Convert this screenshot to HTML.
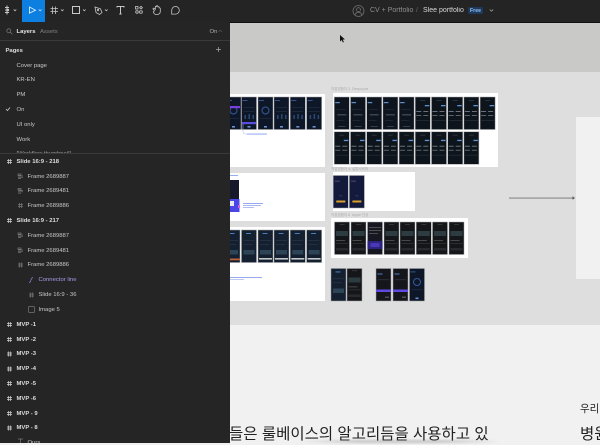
<!DOCTYPE html>
<html lang="ko"><head><meta charset="utf-8"><title>Slee portfolio</title>
<style>
html,body{margin:0;padding:0;background:#f1f1f1}
body{width:600px;height:443px;overflow:hidden;position:relative;font-family:"Liberation Sans","Noto Sans CJK KR",sans-serif}
div,span,svg{position:absolute}
.bg{left:230px;width:370px}
.w{background:#fff}
#side{left:0;top:22px;width:229.5px;height:421px;background:#252525;overflow:hidden}
#outer{left:0;top:0;width:229.5px;height:443px;overflow:hidden}
.t{position:absolute;font-size:5.9px;line-height:8px;color:#c8c8c8;white-space:nowrap;filter:blur(.25px);margin-top:.7px}
.b{font-weight:bold;color:#dedede}
.cap{font-size:3.5px;line-height:5px;color:#aaa;white-space:nowrap;filter:blur(.3px)}
</style></head><body>

<!-- canvas -->
<div class="bg" style="top:22px;height:50px;background:#c9c9c7"></div>
<div class="bg" style="top:72px;height:253px;background:#dedede"></div>
<div class="bg" style="top:325px;height:118px;background:#f1f1f1"></div>
<div style="left:576px;top:117px;width:24px;height:162px;background:#f1f1f1"></div>

<div class="w" style="left:230px;top:94px;width:95px;height:73px"></div>
<div class="w" style="left:230px;top:173px;width:95px;height:48px"></div>
<div class="w" style="left:230px;top:227px;width:95px;height:74px"></div>
<div class="w" style="left:333px;top:93px;width:165px;height:74px"></div>
<div class="w" style="left:333px;top:172px;width:82px;height:39px"></div>
<div class="w" style="left:331px;top:218px;width:137px;height:40px"></div>

<div class="cap" style="left:331px;top:87px">직접경험자 2. Deepcycle</div>
<div class="cap" style="left:331px;top:167px">직접경험자 4. 설립서비처</div>
<div class="cap" style="left:331px;top:213px">직접경험자 6. Apple 건강</div>

<svg style="left:0;top:0;filter:blur(.3px)" width="600" height="443" viewBox="0 0 600 443">
<defs>
<g id="a">
<rect width="15" height="32.500" fill="#0e151e" stroke="#a5a7aa" stroke-width=".5"/>
<rect x="1" y="5" width="4.500" height="1.200" fill="#5d8fd0"/>
<rect x="2" y="12" width="9" height=".7" fill="#262f3a"/>
<rect x="3" y="17" width="9" height="1.500" fill="#3a444e"/>
<rect x="2" y="23" width="8" height=".7" fill="#252e38"/>
<rect x="4" y="29" width="7" height="1" fill="#36404a"/>
</g>
<g id="b">
<rect width="15" height="32.500" fill="#0d141b" stroke="#a5a7aa" stroke-width=".5"/>
<rect x="9.500" y="8" width="4.500" height="1.300" fill="#5a93d8"/>
<rect x="5" y="3" width="5" height=".6" fill="#3e4750"/>
<rect x="1" y="14" width="5" height=".8" fill="#808890"/><rect x="8" y="14" width="5" height=".8" fill="#808890"/>
<rect x="1" y="18" width="5" height=".8" fill="#6f7780"/><rect x="8" y="18" width="5" height=".8" fill="#6f7780"/>
<rect x="1" y="23" width="13" height=".8" fill="#232d37"/>
</g>
<g id="c">
<rect width="15" height="32.500" fill="#0e1728" stroke="#9c9ea2" stroke-width=".5"/>
<rect x="1" y="3" width="5" height=".8" fill="#3e64a8"/>
<rect x="2" y="10" width="11" height=".6" fill="#26324a"/><rect x="2" y="14" width="11" height=".6" fill="#26324a"/>
<rect x="3" y="18" width="1.500" height="4" fill="#2c4870"/><rect x="7" y="17" width="1.500" height="5" fill="#2c4870"/><rect x="11" y="18" width="1.500" height="4" fill="#2c4870"/>
<rect x="6" y="29" width="3" height="1.600" fill="#6a8fd0"/>
</g>
<g id="r">
<rect width="15" height="32.500" fill="#0e1728" stroke="#9c9ea2" stroke-width=".5"/>
<rect x="1" y="3" width="5" height=".8" fill="#3e64a8"/>
<circle cx="7.500" cy="13.500" r="3.500" fill="none" stroke="#355a9c" stroke-width="1"/>
<rect x="2" y="21" width="11" height=".6" fill="#26324a"/>
<rect x="6" y="29" width="3" height="1.600" fill="#6a8fd0"/>
</g>
<g id="d">
<rect width="15" height="32.500" fill="#14202f" stroke="#9c9ea2" stroke-width=".5"/>
<rect x="4.500" y="3" width="5" height=".9" fill="#4d8ad0"/>
<rect x="2" y="10" width="11" height=".6" fill="#2b3a4c"/><rect x="2" y="14" width="9" height=".6" fill="#2b3a4c"/>
<rect x="2" y="20" width="11" height="4.500" fill="#2d4456"/>
</g>
<g id="dw">
<use href="#d"/>
<rect x="1" y="28" width="13" height="1.600" fill="#c6c9cc"/>
</g>
<g id="e">
<rect width="15" height="32.500" fill="#15161a" stroke="#a5a7aa" stroke-width=".5"/>
<rect x="5" y="2" width="5" height=".6" fill="#4a4a4a"/>
<rect x="1.500" y="9" width="12" height="5" fill="#2c3c40"/>
<rect x="1.500" y="18" width="9" height=".8" fill="#555"/><rect x="1.500" y="21" width="12" height=".7" fill="#363636"/>
<rect x="1.500" y="26" width="12" height="2.500" fill="#27292c"/>
</g>
<g id="f">
<rect width="15" height="32.500" fill="#161720" stroke="#a5a7aa" stroke-width=".5"/>
<rect x="1.500" y="5" width="12" height=".7" fill="#666"/><rect x="1.500" y="8" width="12" height=".7" fill="#666"/><rect x="1.500" y="11" width="9" height=".7" fill="#666"/>
<rect y="19" width="15" height="8" fill="#2a2480"/><rect x="3" y="21" width="9" height="4" fill="#4b38b8"/>
</g>
<g id="k">
<rect width="15" height="32.500" fill="#14161c" stroke="#a5a7aa" stroke-width=".5"/>
<rect x="1.500" y="5" width="5" height="1" fill="#4f7fc0"/>
<rect x="2" y="11" width="11" height=".6" fill="#3a3f48"/>
<rect y="21" width="15" height="2.500" fill="#5d4be0"/>
<rect x="9" y="28" width="4" height="1.500" fill="#48505a"/>
</g>
<g id="g">
<rect width="15" height="32.500" fill="#131a3c" stroke="#a5a7aa" stroke-width=".5"/>
<rect x="1.500" y="5" width="5" height="1.500" fill="#3e3a58"/>
<rect x="6" y="20" width="3" height=".7" fill="#444a70"/>
<rect x="3" y="25" width="9" height="2" fill="#d8a22c"/>
</g>
</defs>
<!-- panel 1 -->
<use href="#r" x="226" y="97"/><use href="#c" x="241.500" y="97"/><use href="#r" x="258" y="97"/><use href="#c" x="274" y="97"/><use href="#c" x="290.300" y="97"/><use href="#c" x="306.600" y="97"/>
<rect x="230" y="106" width="10" height="2.200" fill="#7a3fe0"/><rect x="242" y="122" width="14" height="2.200" fill="#5b4be0"/>
<path d="M243 124v8q0 2 2 2h2" fill="none" stroke="#a9bcf0" stroke-width=".5"/>
<rect x="247" y="133.600" width="20" height=".9" fill="#7f9cf0"/>
<!-- panel 2 -->
<rect x="228" y="180" width="11" height="32" fill="#17172c"/><rect x="230" y="199" width="9.500" height="13" fill="#4a45e6"/><rect x="230" y="201" width="4" height="5" fill="#e8e8f4"/>
<rect x="230" y="175" width="8" height=".9" fill="#8aa6f0"/>
<rect x="238" y="205" width="2" height="3" fill="#d060e0"/>
<rect x="243" y="203" width="20" height=".9" fill="#8aa0ee"/><rect x="243" y="205" width="18" height=".9" fill="#9fb2f0"/><rect x="243" y="207" width="11" height=".9" fill="#a9b9f0"/>
<!-- panel 3 -->
<use href="#d" x="225" y="230"/><rect x="230" y="258.500" width="10" height="1.800" fill="#c0603a"/>
<use href="#d" x="241.500" y="230"/><use href="#dw" x="258" y="230"/><use href="#dw" x="274" y="230"/><use href="#dw" x="290.300" y="230"/><use href="#dw" x="306.600" y="230"/>
<rect x="230" y="277" width="32" height=".9" fill="#8aa0ee"/><rect x="230" y="279" width="14" height=".9" fill="#b8c4ee"/>
<g><use href="#a" x="334.300" y="97"/><use href="#a" x="350.500" y="97"/><use href="#a" x="366.700" y="97"/><use href="#a" x="382.900" y="97"/><use href="#a" x="399.100" y="97"/><use href="#b" x="415.300" y="97"/><use href="#b" x="431.500" y="97"/><use href="#b" x="447.700" y="97"/><use href="#b" x="463.900" y="97"/><use href="#b" x="480.100" y="97"/>
<use href="#b" x="334.300" y="131.800"/><use href="#b" x="350.500" y="131.800"/><use href="#b" x="366.700" y="131.800"/><use href="#b" x="382.900" y="131.800"/><use href="#b" x="399.100" y="131.800"/><use href="#b" x="415.300" y="131.800"/><use href="#b" x="431.500" y="131.800"/><use href="#b" x="447.700" y="131.800"/><use href="#b" x="463.900" y="131.800"/></g>
<use href="#g" x="333.300" y="175.500"/><use href="#g" x="349.400" y="175.500"/>
<use href="#e" x="334.500" y="222"/><use href="#e" x="351" y="222"/><use href="#f" x="367.500" y="222"/><use href="#e" x="384" y="222"/><use href="#e" x="400" y="222"/><use href="#e" x="416.300" y="222"/><use href="#e" x="432.500" y="222"/><use href="#e" x="449" y="222"/>
<use href="#d" x="331" y="268.500"/><use href="#e" x="347" y="268.500"/><use href="#k" x="376" y="268.500"/><use href="#k" x="393" y="268.500"/><use href="#r" x="409.500" y="268.500"/>
</svg>
<svg style="left:0;top:0" width="600" height="443" viewBox="0 0 600 443">
<rect x="509" y="197.700" width="64" height=".7" fill="#555"/><path d="M572.500 196.300l2.500 1.700-2.500 1.700z" fill="#555"/>
<path d="M340 35l0 6.500 1.700-1.500 1.200 2.500 1-.5-1.200-2.400 2.200-.2z" fill="#111"/>
</svg>

<!-- bottom text -->
<div style="left:229px;top:424.500px;font-size:15.500px;line-height:20px;color:#222;white-space:nowrap;filter:blur(.2px)">들은 룰베이스의 알고리듬을 사용하고 있</div>
<div style="left:580px;top:402px;font-size:10.500px;line-height:14px;color:#222;white-space:nowrap">우리</div>
<div style="left:580px;top:424.500px;font-size:15.500px;line-height:20px;color:#222;white-space:nowrap;filter:blur(.2px)">병원</div>
<div style="left:300px;top:440px;width:200px;height:3px;background:linear-gradient(90deg,rgba(120,120,120,0),rgba(120,120,120,.35) 30%,rgba(120,120,120,.35) 70%,rgba(120,120,120,0));filter:blur(1px)"></div>

<!-- toolbar -->
<div style="left:0;top:0;width:600px;height:21.500px;background:#242424;border-bottom:.5px solid #111"></div>
<div style="left:22px;top:0;width:22.500px;height:21.500px;background:#0d7fe0"></div>
<svg style="left:0;top:0;filter:blur(.2px)" width="200" height="22" viewBox="0 0 200 22" fill="none" stroke="#c8c8c8" stroke-width=".8">
<path d="M5 7.500h4M5 10h4M5 12.500h4M7 5.500v9" stroke-width="1"/><circle cx="8" cy="10" r="1.200" fill="#c8c8c8" stroke="none"/>
<path d="M13.700 9.500l1.300 1.300 1.300-1.300"/>
<path d="M29.500 7l6 3.200-6 3z" stroke="#d8ecff" stroke-width=".9"/><path d="M38.800 9.500l1.300 1.300 1.300-1.300" stroke="#cfe6ff"/>
<path d="M52.500 6.500v7.500M55.500 6.500v7.500M50.500 8.500h7.500M50.500 11.500h7.500"/><path d="M61 9.500l1.300 1.300 1.300-1.300"/>
<rect x="72.500" y="6.500" width="7" height="7" stroke-width="1"/><path d="M83 9.500l1.300 1.300 1.300-1.300"/>
<path d="M95 7l5.500 1.800 1.500 3.700-2.500 2-3.500-2z"/><circle cx="98" cy="10" r=".8"/><path d="M105 9.500l1.300 1.300 1.300-1.300"/>
<path d="M117 7.500v-1h7v1M120.500 6.500v7.500M119.300 14h2.400" stroke-width="1"/>
<rect x="135.500" y="6.500" width="2.500" height="2.500"/><path d="M141 6.300l1.400 1.400-1.400 1.400-1.400-1.400z"/><circle cx="137" cy="12" r="1.300"/><rect x="139.500" y="10.800" width="2.800" height="2.400" rx="1"/>
<path d="M154.500 10.500l-1.200-1.200c-.8-.6 0-1.500.8-1l1.200 1V7c0-.9 1.200-.9 1.200 0V6.200c0-.8 1.300-.8 1.300 0v1c0-.8 1.300-.7 1.300.1v1c0-.7 1.200-.6 1.200.2v3c0 1.700-1.300 3-3 3h-1c-1.700 0-2.500-1.300-3-2.500z"/>
<path d="M175.500 6.500a3.800 3.800 0 1 1 0 7.600h-3.800v-3.800a3.800 3.800 0 0 1 3.800-3.800z"/>
</svg>
<svg style="left:352px;top:4px" width="14" height="14" viewBox="0 0 14 14" fill="none" stroke="#6e6e6e" stroke-width=".8"><circle cx="6.500" cy="7" r="5.500"/><circle cx="6.500" cy="5.700" r="2"/><path d="M3 11c.6-2 2-2.700 3.500-2.700S9.500 9 10 11"/></svg>
<div class="t" style="left:370px;top:6.500px;font-size:7px;color:#8e8e8e">CV + Portfolio</div>
<div class="t" style="left:416px;top:6.500px;font-size:7px;color:#666">/</div>
<div class="t" style="left:423px;top:6.500px;font-size:7px;color:#d8d8d8">Slee portfolio</div>
<div style="left:468px;top:7.300px;width:15px;height:6.500px;background:#1d3a5c;border-radius:1.500px"></div>
<div class="t" style="left:470px;top:6.500px;font-size:5.200px;color:#8fbdf0;font-weight:bold">Free</div>
<svg style="left:489px;top:8px" width="5" height="5" fill="none" stroke="#aaa" stroke-width=".7"><path d="M.8 1.500l1.700 1.700 1.700-1.700"/></svg>

<!-- sidebar -->
<div id="side"></div>
<div id="outer">
<div style="left:0;top:40px;width:230px;height:.5px;background:#3a3a3a"></div>
<svg style="left:6px;top:28px" width="7" height="7" fill="none" stroke="#8a8a8a" stroke-width=".6"><circle cx="2.800" cy="2.800" r="2"/><path d="M4.300 4.300l2 2"/></svg>
<div class="t b" style="left:16.500px;top:27px;color:#e6e6e6">Layers</div>
<div class="t" style="left:40px;top:27px;color:#808080">Assets</div>
<div class="t" style="left:209.500px;top:27px;color:#b0b0b0">On</div>
<svg style="left:218px;top:29px" width="5" height="4" fill="none" stroke="#8a8a8a" stroke-width=".5"><path d="M.7 2.800l1.600-1.600 1.600 1.600"/></svg>
<div class="t b" style="left:5.500px;top:46px">Pages</div>
<svg style="left:215px;top:46px" width="7" height="7" stroke="#aaa" stroke-width=".7"><path d="M3.500 1v5M1 3.500h5"/></svg>
<div class="t" style="left:16.500px;top:61px">Cover page</div>
<div class="t" style="left:16.500px;top:75.500px">KR-EN</div>
<div class="t" style="left:16.500px;top:90.500px">PM</div>
<svg style="left:5px;top:106px" width="6" height="6" fill="none" stroke="#ccc" stroke-width=".8"><path d="M1 3l1.500 1.500 2.500-3"/></svg>
<div class="t" style="left:16.500px;top:105px">On</div>
<div class="t" style="left:16.500px;top:120px">UI only</div>
<div class="t" style="left:16.500px;top:135px">Work</div>
<div style="left:0;top:149.500px;width:229.500px;height:3.500px;overflow:hidden"><div class="t" style="left:16.500px;top:-.5px;color:#9a9a9a">[Workflow thumbnail]</div></div>
<div style="left:0;top:153px;width:229.500px;height:.5px;background:#3a3a3a"></div>

<div class="t b" style="left:16.500px;top:157px">Slide 16:9 - 218</div>
<div class="t" style="left:27.500px;top:172px">Frame 2689887</div>
<div class="t" style="left:27.500px;top:186.500px">Frame 2689481</div>
<div class="t" style="left:27.500px;top:201px">Frame 2689886</div>
<div class="t b" style="left:16.500px;top:216px">Slide 16:9 - 217</div>
<div class="t" style="left:27.500px;top:231px">Frame 2689887</div>
<div class="t" style="left:27.500px;top:246px">Frame 2689481</div>
<div class="t" style="left:27.500px;top:260.500px">Frame 2689886</div>
<div class="t" style="left:38.500px;top:275.500px;color:#a79be8">Connector line</div>
<div class="t" style="left:38.500px;top:290.500px">Slide 16:9 - 36</div>
<div class="t" style="left:38.500px;top:305px">Image 5</div>
<div class="t b" style="left:16.500px;top:320px">MVP -1</div>
<div class="t b" style="left:16.500px;top:335px">MVP -2</div>
<div class="t b" style="left:16.500px;top:349.500px">MVP -3</div>
<div class="t b" style="left:16.500px;top:364.500px">MVP -4</div>
<div class="t b" style="left:16.500px;top:379px">MVP -5</div>
<div class="t b" style="left:16.500px;top:394px">MVP -6</div>
<div class="t b" style="left:16.500px;top:409px">MVP - 9</div>
<div class="t b" style="left:16.500px;top:423.500px">MVP - 8</div>
<div class="t" style="left:27.500px;top:438px">Ours</div>

<svg style="left:0;top:0" width="230" height="443" fill="none" stroke="#a8a8a8" stroke-width=".7">
<defs><path id="h" d="M1.500 0v5M3.500 0v5M0 1.500h5M0 3.500h5"/><path id="l" d="M0 0h3v1.300H0zM0 2h5M0 3.300h5M0 4.600h3"/></defs>
<g stroke="#d0d0d0"><use href="#h" x="7" y="159"/><use href="#h" x="7" y="218"/><use href="#h" x="7" y="322"/><use href="#h" x="7" y="337"/><use href="#h" x="7" y="351.500"/><use href="#h" x="7" y="366.500"/><use href="#h" x="7" y="381"/><use href="#h" x="7" y="396"/><use href="#h" x="7" y="411"/><use href="#h" x="7" y="425.500"/></g>
<g stroke="#777"><use href="#l" x="18" y="174"/><use href="#l" x="18" y="188.500"/><use href="#h" x="18" y="203"/><use href="#l" x="18" y="233"/><use href="#l" x="18" y="248"/><use href="#h" x="18" y="262.500"/><use href="#h" x="29" y="292.500"/>
<rect x="28.500" y="306.500" width="6" height="6" rx="1"/><path d="M18 439h5M20.500 439v4"/></g>
<path d="M29 282.500c2.500 0 1.500-5 4-5" stroke="#8f82d8"/>
</svg>
</div>
</body></html>
